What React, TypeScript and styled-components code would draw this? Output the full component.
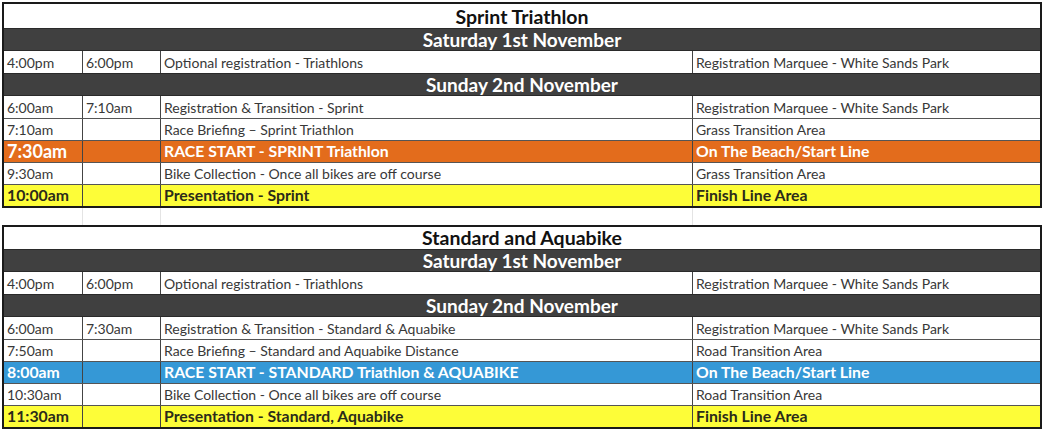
import React from "react";
import styled, { createGlobalStyle } from "styled-components";

type Tone = "plain" | "orange" | "blue" | "yellow";

interface Item {
    start: string;
    end?: string;
    what: string;
    where: string;
    tone?: Tone;
    bigStart?: boolean;
}

interface Day {
    title: string;
    items: Item[];
}

interface Race {
    name: string;
    days: Day[];
}

const races: Race[] = [
    {
        name: "Sprint Triathlon",
        days: [
            {
                title: "Saturday 1st November",
                items: [
                    { start: "4:00pm", end: "6:00pm", what: "Optional registration - Triathlons", where: "Registration Marquee - White Sands Park" },
                ],
            },
            {
                title: "Sunday 2nd November",
                items: [
                    { start: "6:00am", end: "7:10am", what: "Registration & Transition - Sprint", where: "Registration Marquee - White Sands Park" },
                    { start: "7:10am", what: "Race Briefing \u2013 Sprint Triathlon", where: "Grass Transition Area" },
                    { start: "7:30am", what: "RACE START - SPRINT Triathlon", where: "On The Beach/Start Line", tone: "orange", bigStart: true },
                    { start: "9:30am", what: "Bike Collection - Once all bikes are off course", where: "Grass Transition Area" },
                    { start: "10:00am", what: "Presentation - Sprint", where: "Finish Line Area", tone: "yellow" },
                ],
            },
        ],
    },
    {
        name: "Standard and Aquabike",
        days: [
            {
                title: "Saturday 1st November",
                items: [
                    { start: "4:00pm", end: "6:00pm", what: "Optional registration - Triathlons", where: "Registration Marquee - White Sands Park" },
                ],
            },
            {
                title: "Sunday 2nd November",
                items: [
                    { start: "6:00am", end: "7:30am", what: "Registration & Transition - Standard & Aquabike", where: "Registration Marquee - White Sands Park" },
                    { start: "7:50am", what: "Race Briefing \u2013 Standard and Aquabike Distance", where: "Road Transition Area" },
                    { start: "8:00am", what: "RACE START - STANDARD Triathlon & AQUABIKE", where: "On The Beach/Start Line", tone: "blue" },
                    { start: "10:30am", what: "Bike Collection - Once all bikes are off course", where: "Road Transition Area" },
                    { start: "11:30am", what: "Presentation - Standard, Aquabike", where: "Finish Line Area", tone: "yellow" },
                ],
            },
        ],
    },
];

const toneBg: Record<Tone, string> = {
    plain: "#ffffff",
    orange: "#e36c1c",
    blue: "#3598d6",
    yellow: "#fdfd38",
};

const toneFg: Record<Tone, string> = {
    plain: "#383838",
    orange: "#ffffff",
    blue: "#ffffff",
    yellow: "#2b2b1a",
};

const GlobalStyle = createGlobalStyle`
    body {
        margin: 0;
        background: #ffffff;
        font-family: Lato, "Liberation Sans", sans-serif;
    }
`;

const Sheet = styled.div`
    width: 1045px;
    padding: 2px 0 4px 2px;
    border-right: 1px solid #dedede;
    display: flex;
    flex-direction: column;
`;

const Block = styled.div`
    width: 1036px;
    border: 2px solid #1a1a1a;
    display: flex;
    flex-direction: column;
`;

const Title = styled.div<{ $h: number }>`
    height: ${(p) => p.$h}px;
    display: flex;
    align-items: flex-end;
    justify-content: center;
    font-weight: 700;
    font-size: 19.5px;
    line-height: 22px;
    color: #111;
    box-sizing: border-box;
`;

const DayBar = styled.div`
    height: 23px;
    background: #404040;
    border-top: 1px solid #2a2a2a;
    border-bottom: 1px solid #2a2a2a;
    box-sizing: border-box;
    display: flex;
    align-items: flex-end;
    justify-content: center;
    color: #ffffff;
    font-weight: 700;
    font-size: 19px;
    line-height: 21px;
`;

const Row = styled.div<{ $tone: Tone }>`
    height: 22px;
    display: grid;
    grid-template-columns: 78px 78px 532px 1fr;
    background: ${(p) => toneBg[p.$tone]};
    color: ${(p) => toneFg[p.$tone]};
    font-weight: ${(p) => (p.$tone === "plain" ? 400 : 700)};
    font-size: ${(p) => (p.$tone === "plain" ? "14px" : "15.8px")};
    & + & {
        border-top: 1px solid #555;
    }
    box-sizing: border-box;
`;

const Cell = styled.div<{ $big?: boolean }>`
    display: flex;
    align-items: flex-end;
    padding: 0 0 ${(p) => (p.$big ? "1px" : "2px")} 3px;
    white-space: nowrap;
    overflow: hidden;
    ${(p) => (p.$big ? "font-size: 18px; line-height: 20px;" : "")}
    & + & {
        border-left: 1px solid #444;
    }
`;

const Gap = styled.div`
    height: 17px;
    width: 1038px;
    display: grid;
    grid-template-columns: 80px 78px 532px 1fr;
`;

const GapCell = styled.div`
    & + & {
        border-left: 1px solid #e4e4e4;
    }
`;

const RaceBlock: React.FC<{ race: Race; titleHeight: number }> = ({ race, titleHeight }) => (
    <Block>
        <Title $h={titleHeight}>{race.name}</Title>
        {race.days.map((day) => (
            <React.Fragment key={day.title}>
                <DayBar>{day.title}</DayBar>
                <div>
                    {day.items.map((it) => (
                        <Row key={it.start + it.what} $tone={it.tone ?? "plain"}>
                            <Cell $big={it.bigStart}>{it.start}</Cell>
                            <Cell>{it.end ?? ""}</Cell>
                            <Cell>{it.what}</Cell>
                            <Cell>{it.where}</Cell>
                        </Row>
                    ))}
                </div>
            </React.Fragment>
        ))}
    </Block>
);

const App: React.FC = () => {
    return (
        <>
            <GlobalStyle />
            <Sheet>
                <RaceBlock race={races[0]} titleHeight={24} />
                <Gap>
                    <GapCell />
                    <GapCell />
                    <GapCell />
                    <GapCell />
                </Gap>
                <RaceBlock race={races[1]} titleHeight={22} />
            </Sheet>
        </>
    );
};

export default App;
